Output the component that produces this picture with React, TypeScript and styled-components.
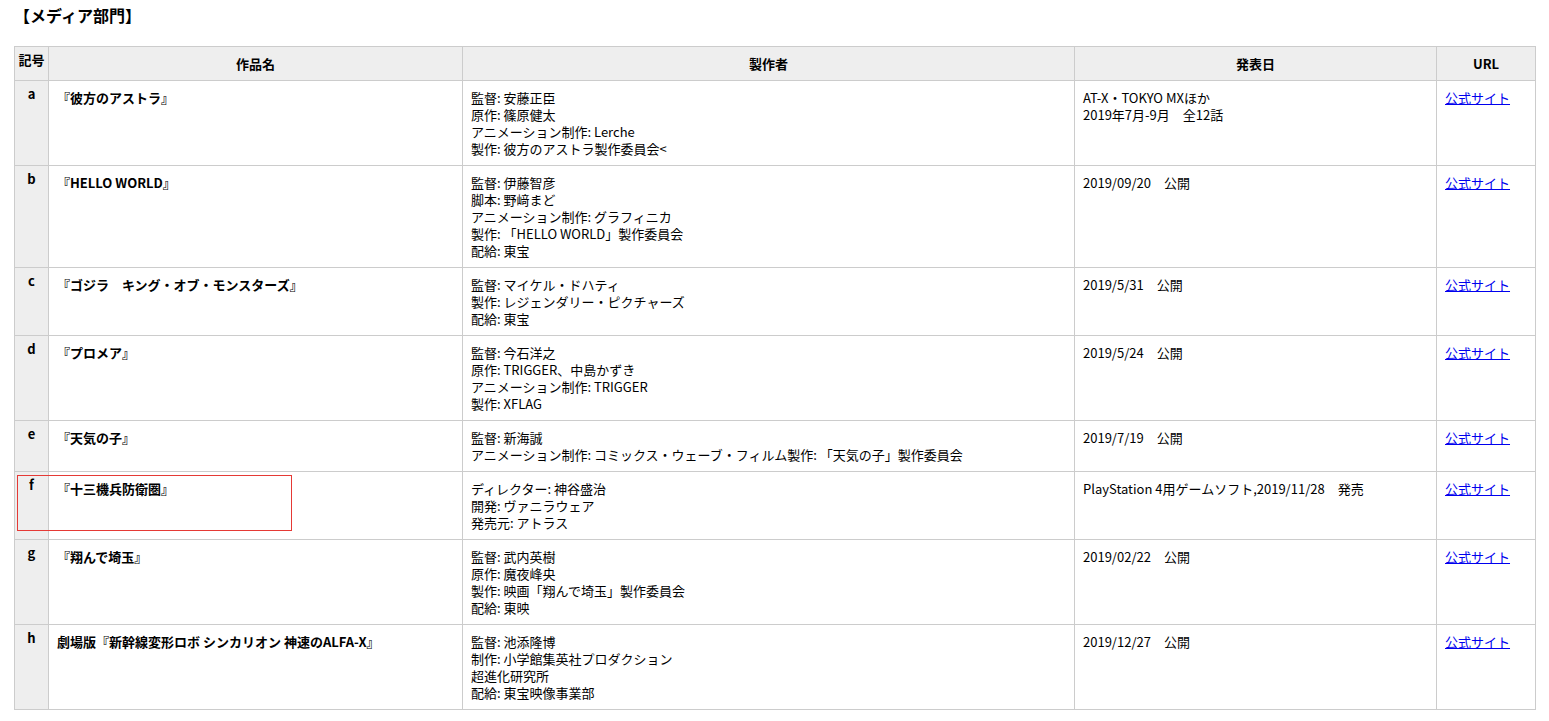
import React from "react";
import styled, { createGlobalStyle } from "styled-components";

const GlobalStyle = createGlobalStyle`
  html, body { margin: 0; padding: 0; background: #fff; }
  body {
    font-family: "Noto Sans CJK JP", "Noto Sans", sans-serif;
    color: #000;
    font-size: 13px;
  }
`;

const Page = styled.div`
  padding: 3px 13px 11px 14px;
`;

const Heading = styled.h2`
  margin: 0 0 19px 0;
  font-size: 16px;
  line-height: 24px;
  font-weight: bold;
`;

const TableWrap = styled.div`
  position: relative;
  width: 1521px;
`;

const Table = styled.table`
  width: 1521px;
  table-layout: fixed;
  border-collapse: collapse;
  font-size: 13px;
  line-height: 17px;
`;

const HeadCell = styled.th<{ $mark?: boolean }>`
  background: #eeeeee;
  border: 1px solid #cccccc;
  font-weight: bold;
  text-align: center;
  padding: ${(p) => (p.$mark ? "4px 2px" : "8px")};
  vertical-align: ${(p) => (p.$mark ? "top" : "middle")};
`;

const MarkCell = styled.td`
  background: #eeeeee;
  border: 1px solid #cccccc;
  font-weight: bold;
  text-align: center;
  vertical-align: top;
  padding: 4px 2px;
`;

const Cell = styled.td<{ $bold?: boolean }>`
  border: 1px solid #cccccc;
  vertical-align: top;
  padding: 8px;
  font-weight: ${(p) => (p.$bold ? "bold" : "normal")};
`;

const Line = styled.div``;

const Link = styled.a`
  color: #0000ee;
  text-decoration: underline;
`;

const FocusBox = styled.div`
  position: absolute;
  left: 3px;
  top: 429px;
  width: 273px;
  height: 54px;
  border: 1px solid #e53935;
  pointer-events: none;
`;

type Row = {
  mark: string;
  title: string;
  producer: string[];
  date: string[];
};

const rows: Row[] = [
  {
    mark: "a",
    title: "『彼方のアストラ』",
    producer: ["監督: 安藤正臣", "原作: 篠原健太", "アニメーション制作: Lerche", "製作: 彼方のアストラ製作委員会<"],
    date: ["AT-X・TOKYO MXほか", "2019年7月-9月　全12話"],
  },
  {
    mark: "b",
    title: "『HELLO WORLD』",
    producer: ["監督: 伊藤智彦", "脚本: 野﨑まど", "アニメーション制作: グラフィニカ", "製作: 「HELLO WORLD」製作委員会", "配給: 東宝"],
    date: ["2019/09/20　公開"],
  },
  {
    mark: "c",
    title: "『ゴジラ　キング・オブ・モンスターズ』",
    producer: ["監督: マイケル・ドハティ", "製作: レジェンダリー・ピクチャーズ", "配給: 東宝"],
    date: ["2019/5/31　公開"],
  },
  {
    mark: "d",
    title: "『プロメア』",
    producer: ["監督: 今石洋之", "原作: TRIGGER、中島かずき", "アニメーション制作: TRIGGER", "製作: XFLAG"],
    date: ["2019/5/24　公開"],
  },
  {
    mark: "e",
    title: "『天気の子』",
    producer: ["監督: 新海誠", "アニメーション制作: コミックス・ウェーブ・フィルム製作: 「天気の子」製作委員会"],
    date: ["2019/7/19　公開"],
  },
  {
    mark: "f",
    title: "『十三機兵防衛圏』",
    producer: ["ディレクター: 神谷盛治", "開発: ヴァニラウェア", "発売元: アトラス"],
    date: ["PlayStation 4用ゲームソフト,2019/11/28　発売"],
  },
  {
    mark: "g",
    title: "『翔んで埼玉』",
    producer: ["監督: 武内英樹", "原作: 魔夜峰央", "製作: 映画「翔んで埼玉」製作委員会", "配給: 東映"],
    date: ["2019/02/22　公開"],
  },
  {
    mark: "h",
    title: "劇場版『新幹線変形ロボ シンカリオン 神速のALFA-X』",
    producer: ["監督: 池添隆博", "制作: 小学館集英社プロダクション", "超進化研究所", "配給: 東宝映像事業部"],
    date: ["2019/12/27　公開"],
  },
];

export default function App() {
  return (
    <Page>
      <GlobalStyle />
      <Heading>【メディア部門】</Heading>
      <TableWrap>
        <Table>
          <colgroup>
            <col style={{ width: 34 }} />
            <col style={{ width: 414 }} />
            <col style={{ width: 612 }} />
            <col style={{ width: 362 }} />
            <col style={{ width: 99 }} />
          </colgroup>
          <thead>
            <tr>
              <HeadCell $mark>記号</HeadCell>
              <HeadCell>作品名</HeadCell>
              <HeadCell>製作者</HeadCell>
              <HeadCell>発表日</HeadCell>
              <HeadCell>URL</HeadCell>
            </tr>
          </thead>
          <tbody>
            {rows.map((r) => (
              <tr key={r.mark}>
                <MarkCell>{r.mark}</MarkCell>
                <Cell $bold>{r.title}</Cell>
                <Cell>
                  {r.producer.map((l, i) => (
                    <Line key={i}>{l}</Line>
                  ))}
                </Cell>
                <Cell>
                  {r.date.map((l, i) => (
                    <Line key={i}>{l}</Line>
                  ))}
                </Cell>
                <Cell>
                  <Link href="#">公式サイト</Link>
                </Cell>
              </tr>
            ))}
          </tbody>
        </Table>
        <FocusBox />
      </TableWrap>
    </Page>
  );
}
